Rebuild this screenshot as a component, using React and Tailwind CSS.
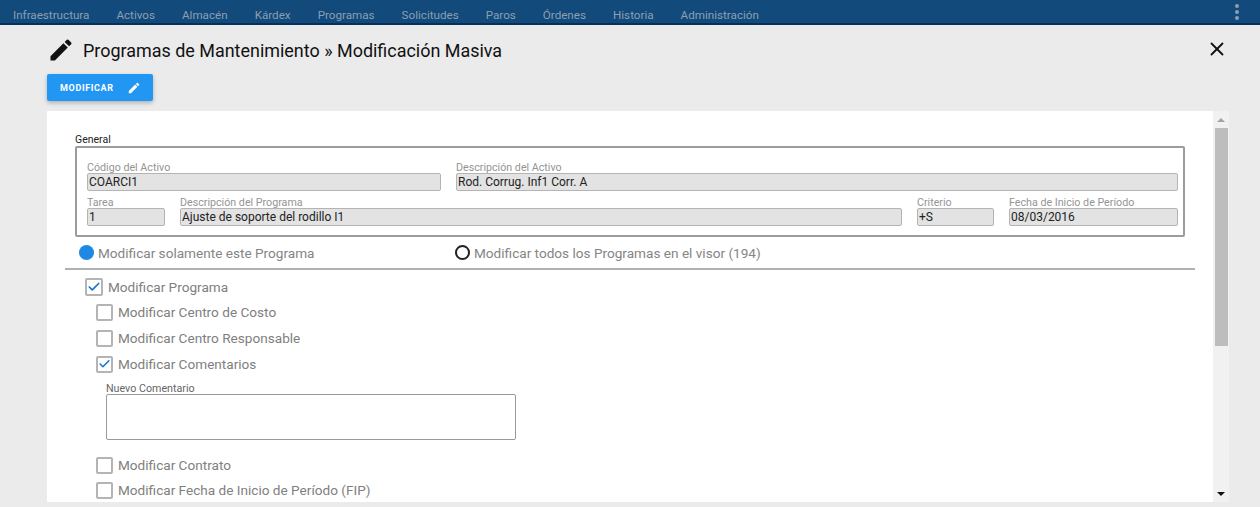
import { Check, X } from 'lucide-react'

const menu = ['Infraestructura', 'Activos', 'Almacén', 'Kárdex', 'Programas', 'Solicitudes', 'Paros', 'Órdenes', 'Historia', 'Administración']

function Pencil({ className }) {
  return (
    <svg viewBox="0 0 24 24" className={className} fill="currentColor">
      <path d="M3 17.25V21h3.75L17.81 9.94l-3.75-3.75L3 17.25zM20.71 7.04a1 1 0 0 0 0-1.41l-2.34-2.34a1 1 0 0 0-1.41 0l-1.83 1.83 3.75 3.75 1.83-1.83z" />
    </svg>
  )
}

function Field({ label, value, className }) {
  return (
    <div className={className}>
      <div className="h-[11px] text-[10.7px] leading-[11px] text-[#949494] whitespace-nowrap">{label}</div>
      <div className="h-[18px] rounded-[2px] border border-[#b4b4b4] bg-[#e3e3e3] px-[1px] pt-[1px] text-[12px] leading-[15px] text-[#222] whitespace-nowrap">{value}</div>
    </div>
  )
}

function Radio({ label, selected, className }) {
  return (
    <div className={`flex items-center gap-[4px] ${className}`}>
      {selected
        ? <span className="size-[15px] rounded-full bg-[#1e88e5]" />
        : <span className="size-[15px] rounded-full border-2 border-[#222] bg-white" />}
      <span className="text-[13.6px] leading-[16px] text-[#858585]">{label}</span>
    </div>
  )
}

function Option({ label, checked, first, className = '' }) {
  return (
    <div className={`flex h-[18px] items-center ${first ? 'gap-[5px]' : 'gap-[5px]'} ${className}`}>
      <span className={`flex items-center justify-center rounded-[2px] border-2 border-[#b4b4b4] bg-white ${first ? 'size-[18px]' : 'size-[17px]'}`}>
        {checked && <Check size={14} strokeWidth={3} className="text-[#1976d2]" />}
      </span>
      <span className="text-[13.6px] leading-[16px] text-[#808080]">{label}</span>
    </div>
  )
}

export default function App() {
  return (
    <div className="flex h-[507px] w-[1260px] flex-col overflow-hidden bg-[#ebebeb] font-['Roboto',sans-serif]">
      {/* Menu bar */}
      <div className="flex h-[25px] shrink-0 items-center justify-between border-b-2 border-[#06305a] bg-[#114a7b] pl-[13px] pr-[21px]">
        <div className="flex gap-[27px] pt-[6px] text-[11.65px] leading-[14px] text-[#8c9fb1]">
          {menu.map((m) => <span key={m}>{m}</span>)}
        </div>
        <div className="flex flex-col gap-[2px]">
          <span className="size-[4px] rounded-full bg-[#8c9fb1]" />
          <span className="size-[4px] rounded-full bg-[#8c9fb1]" />
          <span className="size-[4px] rounded-full bg-[#8c9fb1]" />
        </div>
      </div>

      {/* Title */}
      <div className="flex h-[49px] shrink-0 items-center pl-[47px] pr-[32px]">
        <Pencil className="size-[28px] text-[#111]" />
        <span className="ml-[8px] mt-[2px] text-[17.95px] leading-[22px] text-[#111]">Programas de Mantenimiento » Modificación Masiva</span>
        <X size={22} strokeWidth={2} className="mb-[2px] ml-auto text-[#111]" />
      </div>

      <div className="shrink-0 pl-[47px]">
        <button className="flex h-[27px] w-[106px] items-center rounded-[2px] bg-[#2196f3] pl-[13px] pt-[2px] text-[9px] font-bold tracking-[0.65px] text-white shadow-[0_2px_4px_rgba(0,0,0,0.25)]">
          MODIFICAR
          <Pencil className="mb-[2px] ml-[13px] size-[14px] text-white" />
        </button>
      </div>

      {/* Panel */}
      <div className="ml-[47px] mt-[10px] flex h-[391px] w-[1182px] shrink-0">
        <div className="min-w-0 flex-1 overflow-hidden bg-white pl-[18px] pt-[23px]">
          <div className="h-[12px] pl-[10px] pt-[1px] text-[10.5px] leading-[10px] text-[#222]">General</div>
          <div className="ml-[10px] flex h-[91px] w-[1110px] flex-col gap-[6px] rounded-[2px] border-2 border-[#9c9c9c] pl-[10px] pr-[5px] pt-[14px]">
            <div className="flex gap-[15px]">
              <Field label="Código del Activo" value="COARCI1" className="w-[354px]" />
              <Field label="Descripción del Activo" value="Rod. Corrug. Inf1 Corr. A" className="w-[722px]" />
            </div>
            <div className="flex gap-[15px]">
              <Field label="Tarea" value="1" className="w-[78px]" />
              <Field label="Descripción del Programa" value="Ajuste de soporte del rodillo I1" className="w-[722px]" />
              <Field label="Criterio" value="+S" className="w-[77px]" />
              <Field label="Fecha de Inicio de Período" value="08/03/2016" className="w-[169px]" />
            </div>
          </div>

          <div className="flex h-[31px] items-center pl-[14px]">
            <Radio label="Modificar solamente este Programa" selected className="w-[376px]" />
            <Radio label="Modificar todos los Programas en el visor (194)" />
          </div>
          <div className="h-[2px] w-[1130px] bg-[#b0b0b0]" />

          <Option label="Modificar Programa" checked first className="ml-[20px] mt-[8px]" />
          <Option label="Modificar Centro de Costo" className="ml-[31px] mt-[7px]" />
          <Option label="Modificar Centro Responsable" className="ml-[31px] mt-[8px]" />
          <Option label="Modificar Comentarios" checked className="ml-[31px] mt-[8px]" />
          <div className="ml-[41px] mt-[10px] text-[10.7px] leading-[11px] text-[#666]">Nuevo Comentario</div>
          <div className="ml-[41px] h-[46px] w-[410px] rounded-[2px] border border-[#999] bg-white" />
          <Option label="Modificar Contrato" className="ml-[31px] mt-[16px]" />
          <Option label="Modificar Fecha de Inicio de Período (FIP)" className="ml-[31px] mt-[7px]" />
        </div>

        {/* Scrollbar */}
        <div className="flex w-[16px] shrink-0 flex-col items-center bg-[#f1f1f1]">
          <div className="mt-[7px] size-0 border-x-[4px] border-b-[4px] border-x-transparent border-b-[#a3a3a3]" />
          <div className="mt-[6px] h-[218px] w-[13px] bg-[#bdbdbd]" />
          <div className="mb-[6px] mt-auto size-0 border-x-[4px] border-t-[4px] border-x-transparent border-t-[#111]" />
        </div>
      </div>
    </div>
  )
}
